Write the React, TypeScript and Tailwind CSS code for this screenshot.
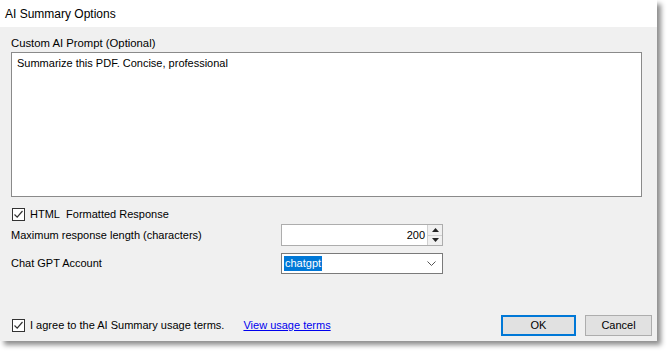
import React from "react";

const font = { fontFamily: '"Liberation Sans", Arial, sans-serif' };

function CheckBox() {
  return (
    <div className="w-[13px] h-[13px] border border-[#333] bg-white flex items-center justify-center shrink-0">
      <svg width="11" height="11" viewBox="0 0 11 11">
        <path d="M1.5 5.5 L4.2 8.2 L9.5 2" fill="none" stroke="#333" strokeWidth="1.2" />
      </svg>
    </div>
  );
}

export default function App() {
  return (
    <div className="w-[670px] h-[354px] bg-white relative overflow-hidden text-[11px] text-black" style={font}>
      <div className="w-[657px] h-[341px] flex flex-col shadow-[4px_4px_5px_rgba(0,0,0,0.45)]">
        <div className="h-[27px] bg-white flex items-center pl-[5px] text-[12px]">AI Summary Options</div>
        <div className="flex-1 bg-[#f0f0f0] flex flex-col pl-[11px] pr-[5px]">
          <div className="pt-[9px] leading-[15px] text-[11.3px]">Custom AI Prompt (Optional)</div>
          <div className="mt-[1px] w-[631px] h-[145px] bg-white border border-[#8a8a8a] px-[5px] pt-[3px] leading-[15px]">
            Summarize this PDF. Concise, professional
          </div>
          <div className="mt-[10px] flex items-center gap-[5px] h-[14px] pl-[1px]">
            <CheckBox />
            <span>HTML&nbsp;&nbsp;Formatted Response</span>
          </div>
          <div className="mt-[3px] flex items-center h-[22px]">
            <span className="w-[270px]">Maximum response length (characters)</span>
            <div className="w-[162px] h-[22px] bg-white border border-[#adadad] flex items-stretch">
              <div className="flex-1 flex items-center justify-end pr-[2px]">200</div>
              <div className="w-[15px] flex flex-col border-l border-[#d0d0d0] bg-[#f0f0f0]">
                <div className="flex-1 flex items-center justify-center border-b border-[#d0d0d0]">
                  <svg width="7" height="4" viewBox="0 0 7 4"><path d="M0 4 L3.5 0 L7 4 Z" fill="#222" /></svg>
                </div>
                <div className="flex-1 flex items-center justify-center">
                  <svg width="7" height="4" viewBox="0 0 7 4"><path d="M0 0 L3.5 4 L7 0 Z" fill="#222" /></svg>
                </div>
              </div>
            </div>
          </div>
          <div className="mt-[7px] flex items-center h-[21px]">
            <span className="w-[270px]">Chat GPT Account</span>
            <div className="w-[162px] h-[21px] bg-white border border-[#7a7a7a] flex items-center pl-[2px] pr-[6px]">
              <span className="bg-[#0078d7] text-white px-[1px] leading-[15px]">chatgpt</span>
              <div className="flex-1" />
              <svg width="9" height="6" viewBox="0 0 9 6"><path d="M0.5 0.5 L4.5 4.5 L8.5 0.5" fill="none" stroke="#555" strokeWidth="1" /></svg>
            </div>
          </div>
          <div className="flex-1" />
          <div className="flex items-center h-[21px] mb-[5px]">
            <div className="pl-[1px] flex items-center gap-[5px]">
              <CheckBox />
              <span>I agree to the AI Summary usage terms.</span>
            </div>
            <a className="ml-[19px] text-[#0000ee] underline">View usage terms</a>
            <div className="flex-1" />
            <button className="w-[75px] h-[21px] border-2 border-[#0078d7] bg-[#e1e1e1] text-[11px]">OK</button>
            <button className="ml-[9px] w-[67px] h-[21px] border border-[#adadad] bg-[#e1e1e1] text-[11px]">Cancel</button>
          </div>
        </div>
      </div>
    </div>
  );
}
